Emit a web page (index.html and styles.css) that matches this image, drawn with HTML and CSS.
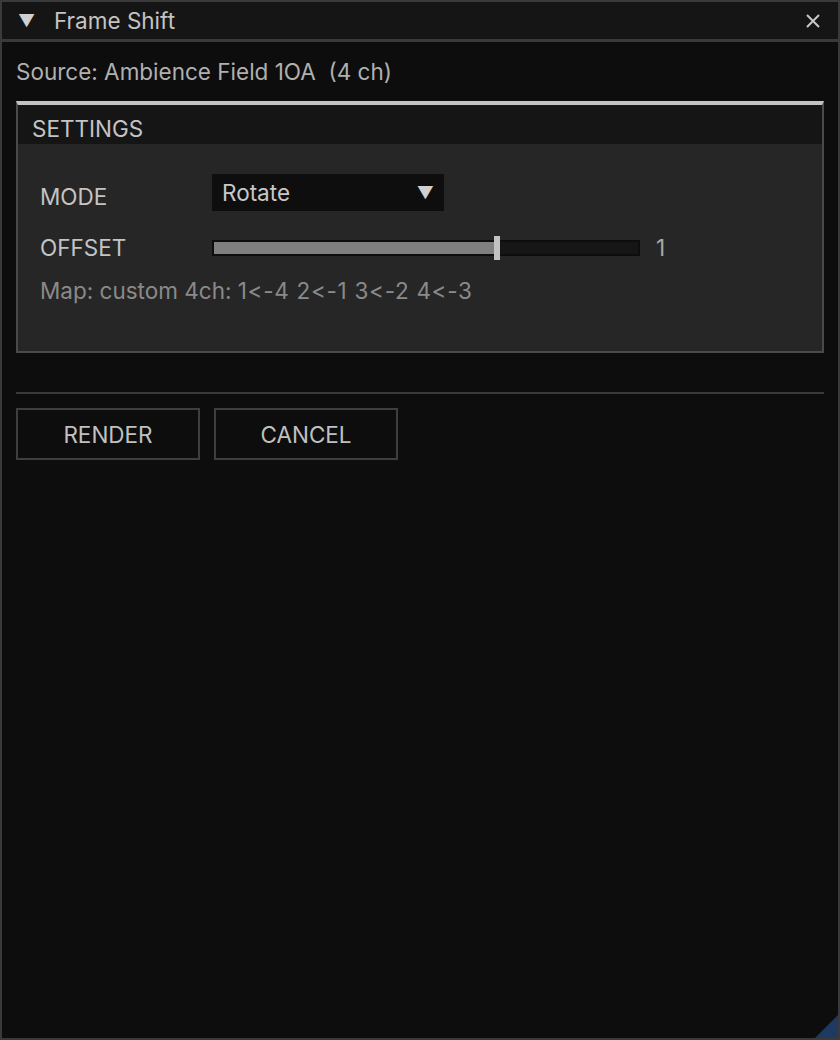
FILE: index.html
```html
<!DOCTYPE html>
<html>
<head>
<meta charset="utf-8">
<link rel="stylesheet" href="styles.css">
</head>
<body>
<div class="window">
  <div class="titlebar">
    <span class="collapse">&#9660;</span>
    <span class="title">Frame Shift</span>
    <svg class="close" width="14" height="14" viewBox="0 0 14 14"><path d="M1 1L13 13M13 1L1 13" stroke="#c8c8c8" stroke-width="2"/></svg>
  </div>
  <div class="content">
    <div class="source">Source: Ambience Field 1OA&nbsp; (4 ch)</div>
    <div class="panel">
      <div class="panel-head">SETTINGS</div>
      <div class="panel-body">
        <div class="row row-mode">
          <span class="label">MODE</span>
          <div class="combo"><span>Rotate</span><span class="combo-arrow">&#9660;</span></div>
        </div>
        <div class="row row-offset">
          <span class="label">OFFSET</span>
          <div class="slider">
            <div class="slider-fill" style="width:280px"></div>
            <div class="slider-thumb"></div>
          </div>
          <span class="value">1</span>
        </div>
        <div class="map">Map: custom 4ch: <span class="map-list">1&lt;-4 2&lt;-1 3&lt;-2 4&lt;-3</span></div>
      </div>
    </div>
    <div class="sep"></div>
    <div class="buttons">
      <button class="btn">RENDER</button>
      <button class="btn">CANCEL</button>
    </div>
  </div>
  <div class="grip"></div>
</div>
</body>
</html>
```
FILE: styles.css
```css
html, body {
  margin: 0;
  padding: 0;
  background: #0d0d0d;
}
body {
  font-family: Inter, "Noto Sans", sans-serif;
  font-size: 22.5px;
  line-height: 28px;
  color: #c4c4c4;
}
.window {
  position: relative;
  width: 840px;
  height: 1040px;
  box-sizing: border-box;
  border: 2px solid #3a3a3a;
  background: #0d0d0d;
  overflow: hidden;
}
.titlebar {
  height: 37px;
  background: #151515;
  border-bottom: 3px solid #3a3a3a;
  display: flex;
  align-items: center;
  padding: 0 16px;
}
.collapse {
  font-size: 17px;
  width: 36px;
  color: #d0d0d0;
}
.title {
  flex: 1;
  color: #c4c4c4;
  padding-top: 1px;
}
.close {
  margin-right: 2px;
}
.content {
  padding: 0 14px;
}
.source {
  height: 59px;
  line-height: 60px;
  color: #b0b0b0;
}
.panel {
  border: 2px solid #4a4a4a;
  border-top: 4px solid #c2c2c2;
  background: #262626;
}
.panel-head {
  height: 39px;
  line-height: 48px;
  background: #151515;
  padding-left: 14px;
  color: #c4c4c4;
  overflow: hidden;
}
.panel-body {
  height: 207px;
  padding: 30px 0 0 22px;
  box-sizing: border-box;
}
.row {
  display: flex;
  align-items: center;
}
.label {
  width: 172px;
  color: #c4c4c4;
}
.row-mode {
  height: 37px;
}
.row-mode .label {
  padding-top: 8px;
}
.combo {
  width: 232px;
  height: 37px;
  background: #0e0e0e;
  display: flex;
  align-items: center;
  justify-content: space-between;
  padding: 0 10px;
  box-sizing: border-box;
  color: #c8c8c8;
}
.combo-arrow {
  font-size: 17px;
  color: #d0d0d0;
}
.row-offset {
  margin-top: 24px;
  height: 26px;
}
.slider {
  position: relative;
  width: 428px;
  height: 16px;
  background: #161616;
  border: 2px solid #0d0d0d;
  box-sizing: border-box;
}
.slider-fill {
  height: 100%;
  background: #808080;
}
.slider-thumb {
  position: absolute;
  left: 280px;
  top: -6px;
  width: 6px;
  height: 24px;
  background: #c2c2c2;
}
.value {
  margin-left: 16px;
  color: #a8a8a8;
}
.map {
  margin-top: 16px;
  color: #8a8a8a;
}
.map-list {
  letter-spacing: 0.7px;
}
.sep {
  margin-top: 39px;
  height: 2px;
  background: #3a3a3a;
}
.buttons {
  display: flex;
  gap: 14px;
  margin-top: 14px;
}
.btn {
  width: 184px;
  height: 52px;
  background: #0d0d0d;
  border: 2px solid #3e3e3e;
  color: #c0c0c0;
  font-family: Inter, "Noto Sans", sans-serif;
  font-size: 22.5px;
  padding: 0;
}
.grip {
  position: absolute;
  right: 0;
  bottom: 0;
  width: 0;
  height: 0;
  border-left: 23px solid transparent;
  border-bottom: 23px solid #1e3a60;
}
```
